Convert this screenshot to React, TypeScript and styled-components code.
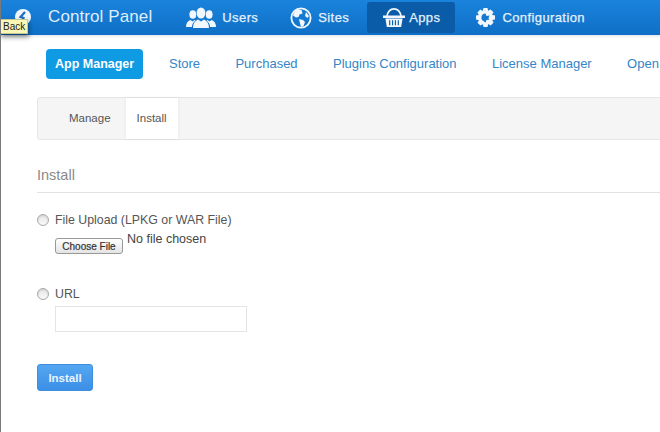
import React from 'react'
import styled, { createGlobalStyle } from 'styled-components'

const GlobalStyle = createGlobalStyle`
  html, body {
    margin: 0;
    padding: 0;
    background: #fff;
    overflow: hidden;
  }
  * {
    box-sizing: border-box;
  }
  body {
    font-family: 'Liberation Sans', Arial, sans-serif;
  }
`

const Page = styled.div`
  position: relative;
  width: 660px;
  height: 432px;
  overflow: hidden;
  background: #fff;
  border-left: 1px solid #77797c;
`

const TopBar = styled.header`
  display: flex;
  align-items: center;
  height: 35px;
  padding: 0 0 1px 14px;
  background: linear-gradient(#1a83dc, #0f6fc6);
  box-shadow: 0 1px 3px rgba(0, 40, 90, 0.15);
  color: #fff;
`

const BrandIcon = styled.svg`
  width: 16px;
  height: 16px;
  flex: none;
`

const Brand = styled.div`
  margin: 0 20px 0 17px;
  font-size: 17px;
  font-weight: 400;
  letter-spacing: 0.1px;
  color: #deeefb;
  white-space: nowrap;
`

const TopNav = styled.nav`
  display: flex;
  align-items: center;
  gap: 4px;
`

const TopItem = styled.a<{ $active?: boolean; $gap?: number }>`
  display: flex;
  align-items: center;
  gap: ${(p) => p.$gap ?? 6}px;
  height: 31px;
  margin: 1px ${(p) => (p.$active ? '3px' : '0')} 0 0;
  padding: ${(p) => (p.$active ? '0 15px 0 16px' : '0 14px')};
  border-radius: 3px;
  background: ${(p) => (p.$active ? '#0b5ca8' : 'transparent')};
  font-size: 13px;
  letter-spacing: 0.4px;
  -webkit-text-stroke: 0.25px #e3f0fb;
  color: #e3f0fb;
  white-space: nowrap;

  svg {
    display: block;
    flex: none;
  }
`

const Tooltip = styled.div`
  position: absolute;
  left: -1px;
  top: 19px;
  height: 15px;
  padding: 0 2px 0 2px;
  background: #f9f7b8;
  border: 1px solid #c9c68c;
  box-shadow: 1px 3px 5px rgba(0, 0, 0, 0.45);
  font-size: 10px;
  line-height: 13px;
  color: #222;
`

const Content = styled.main`
  padding: 14px 0 0 36px;
`

const Pills = styled.nav`
  display: flex;
  align-items: center;
  height: 30px;
  margin-left: 9px;
  white-space: nowrap;
`

const Pill = styled.a<{ $active?: boolean }>`
  display: block;
  height: 30px;
  line-height: 30px;
  padding: 0 ${(p) => (p.$active ? '9px' : '8.8px')};
  margin-right: ${(p) => (p.$active ? '17px' : '17.8px')};
  border-radius: 4px;
  background: ${(p) => (p.$active ? '#0f9ae4' : 'transparent')};
  color: ${(p) => (p.$active ? '#fff' : '#3585c8')};
  font-size: ${(p) => (p.$active ? '12.5px' : '13px')};
  font-weight: ${(p) => (p.$active ? 700 : 400)};
`

const TabBar = styled.div`
  display: flex;
  height: 43px;
  margin-top: 18px;
  padding-left: 18px;
  width: 640px;
  background: #f5f5f5;
  border: 1px solid #e6e6e6;
  border-radius: 3px;
`

const Tab = styled.a<{ $active?: boolean }>`
  display: block;
  height: 41px;
  padding: 0 ${(p) => (p.$active ? '11px' : '13px')};
  margin-left: ${(p) => (p.$active ? '2px' : '0')};
  line-height: 41px;
  font-size: 11.5px;
  color: #555;
  background: ${(p) => (p.$active ? '#fff' : 'transparent')};
  box-shadow: ${(p) => (p.$active ? '0 0 3px rgba(0,0,0,0.08)' : 'none')};
`

const Heading = styled.h2`
  margin: 26px 0 0;
  padding-bottom: 7px;
  font-size: 14.5px;
  line-height: 19px;
  font-weight: 400;
  color: #8a8a8a;
  border-bottom: 1px solid #e2e2e2;
`

const Field = styled.div<{ $gap: number }>`
  margin-top: ${(p) => p.$gap}px;
`

const RadioRow = styled.label`
  display: flex;
  align-items: center;
  height: 14px;
  font-size: 12.35px;
  color: #555;
`

const Radio = styled.input.attrs({ type: 'radio' })`
  appearance: none;
  width: 12px;
  height: 12px;
  margin: 0 6px 0 0;
  border: 1px solid #a9a9a9;
  border-radius: 50%;
  background: linear-gradient(#e6e6e6, #fafafa);
  box-shadow: inset 0 1px 2px rgba(0, 0, 0, 0.12);
`

const FileRow = styled.div`
  display: flex;
  align-items: flex-start;
  margin: 6px 0 0 18px;
`

const ChooseButton = styled.button`
  width: 68px;
  height: 16px;
  margin: 5px 4px 0 0;
  padding: 1px 0 0;
  border: 1px solid #999;
  border-radius: 3px;
  background: linear-gradient(#fff, #e4e4e4);
  font-family: inherit;
  font-size: 10px;
  line-height: 13px;
  -webkit-text-stroke: 0.2px #333;
  color: #333;
`

const NoFile = styled.span`
  font-size: 12.5px;
  line-height: 13px;
  color: #444;
`

const TextInput = styled.input`
  display: block;
  width: 192px;
  height: 26px;
  margin: 5px 0 0 18px;
  border: 1px solid #e4e4e4;
  background: #fff;
  outline: none;
`

const SubmitButton = styled.button`
  display: block;
  width: 56px;
  height: 27px;
  margin-top: 32px;
  padding: 0;
  border: 1px solid #3d8edc;
  border-radius: 3px;
  background: linear-gradient(#55a7f2, #3b8fe6);
  font-family: inherit;
  font-size: 11.5px;
  font-weight: 700;
  color: #eaf4fd;
`

const UsersIcon = () => (
  <svg width="30" height="22" viewBox="0 0 30 22" fill="#f1f7fd">
    <ellipse cx="15" cy="6" rx="4.400" ry="5.500" />
    <path d="M7 21c0-4 1.500-7 5-8.500l3 2 3-2c3.500 1.500 5 4.500 5 8.500z" />
    <ellipse cx="6.800" cy="7.500" rx="3.400" ry="4.300" />
    <path d="M0 20c0-3.500 1.500-6 4.500-7l2 1.500L8.500 13l1 .5C7.500 15 6.200 17 5.800 20z" />
    <ellipse cx="23.200" cy="7.500" rx="3.400" ry="4.300" />
    <path d="M30 20c0-3.500-1.500-6-4.500-7l-2 1.500-2-1.500-1 .5c2 1.500 3.300 3.500 3.700 6.500z" />
  </svg>
)

const GlobeIcon = () => (
  <svg width="22" height="22" viewBox="0 0 22 22">
    <circle cx="11" cy="11" r="9.600" fill="none" stroke="#f1f7fd" strokeWidth="1.800" />
    <path
      fill="#f1f7fd"
      d="M7 2.500C5 4 3.500 6 3 8.500l3 2 2.500-.5 1-2.500 3-1-1-3.500zM9 12l4 1 2 2-1.500 4-2.500 1-1-3.500zM16 5l3 4-1.500 2-2.500-2z"
    />
  </svg>
)

const BasketIcon = () => (
  <svg width="22" height="21" viewBox="0 0 23 22" fill="none">
    <path d="M4 10C5 5 8 2 11.500 2S18 5 19 10" stroke="#f1f7fd" strokeWidth="1.700" />
    <path fill="#f1f7fd" d="M0 9h23v2.500H0zM2.500 12h18L19 21H4z" />
    <path stroke="#0b5ca8" strokeWidth="1.200" d="M7 14v5M10 14v5M13 14v5M16 14v5" />
  </svg>
)

const GearIcon = () => (
  <svg width="19" height="19" viewBox="0 0 19 19">
    <path
      fill="#f1f7fd"
      fillRule="evenodd"
      d="M7.500 0h4l.6 2.800 2.500-1.400 2.900 2.900-1.500 2.400L19 7.500v4l-2.800.6 1.400 2.500-2.900 2.900-2.400-1.500-.8 3h-4l-.6-2.800-2.500 1.400-2.900-2.900 1.500-2.400L0 11.500v-4l2.800-.6-1.400-2.500 2.900-2.900 2.400 1.500zM9.500 5.500l1 2.500 3-.5-1 2.500 1 1.500-3 .5-1 2.500-2-1.500a4 4 0 0 1 2-7.500z"
    />
  </svg>
)

const BackIcon = () => (
  <BrandIcon viewBox="0 0 16 16">
    <circle cx="8" cy="8" r="8" fill="#f1f7fd" />
    <path d="M10 3 5.500 8l3 1-1.500 4" fill="none" stroke="#1a6fc0" strokeWidth="2.200" />
  </BrandIcon>
)

export default function App() {
  return (
    <Page>
      <GlobalStyle />
      <TopBar>
        <BackIcon />
        <Brand>Control Panel</Brand>
        <TopNav>
          <TopItem>
            <UsersIcon />
            Users
          </TopItem>
          <TopItem>
            <GlobeIcon />
            Sites
          </TopItem>
          <TopItem $active $gap={4}>
            <BasketIcon />
            Apps
          </TopItem>
          <TopItem $gap={7}>
            <GearIcon />
            Configuration
          </TopItem>
        </TopNav>
      </TopBar>
      <Tooltip>Back</Tooltip>
      <Content>
        <Pills>
          <Pill $active>App Manager</Pill>
          <Pill>Store</Pill>
          <Pill>Purchased</Pill>
          <Pill>Plugins Configuration</Pill>
          <Pill>License Manager</Pill>
          <Pill>Open</Pill>
        </Pills>
        <TabBar>
          <Tab>Manage</Tab>
          <Tab $active>Install</Tab>
        </TabBar>
        <Heading>Install</Heading>
        <Field $gap={20}>
          <RadioRow>
            <Radio name="source" />
            File Upload (LPKG or WAR File)
          </RadioRow>
          <FileRow>
            <ChooseButton>Choose File</ChooseButton>
            <NoFile>No file chosen</NoFile>
          </FileRow>
        </Field>
        <Field $gap={33}>
          <RadioRow>
            <Radio name="source" />
            URL
          </RadioRow>
          <TextInput />
        </Field>
        <SubmitButton>Install</SubmitButton>
      </Content>
    </Page>
  )
}
